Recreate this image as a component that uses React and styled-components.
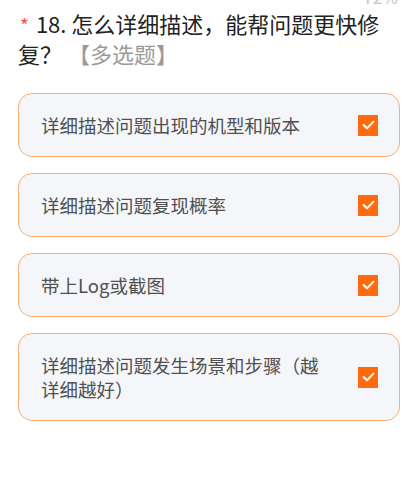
import styled, { createGlobalStyle } from 'styled-components'

const GlobalStyle = createGlobalStyle`
body {
  margin: 0;
  background: #ffffff;
  font-family: "Noto Sans CJK SC", "Noto Sans", sans-serif;
}
`

const Page = styled.div`
width: 414px;
height: 492px;
overflow: hidden;
padding: 0 14px 0 18px;
box-sizing: border-box;
`

const Progress = styled.div`
height: 5px;
overflow: hidden;
display: flex;
justify-content: flex-end;
align-items: flex-end;
margin-right: 2px;
`

const ProgressText = styled.span`
font-size: 17px;
line-height: 17px;
color: #c4c4c4;
`

const Title = styled.h2`
margin: 4px 0 0;
font-size: 22px;
font-weight: 400;
line-height: 29px;
color: #222222;
`

const Star = styled.span`
color: #f4524f;
font-size: 19px;
margin-right: 7px;
margin-left: 2px;
`

const Tag = styled.span`
color: #9a9a9a;
margin-left: 6px;
`

const List = styled.ul`
list-style-type: none;
margin: 25px 0 0;
padding: 0;
display: flex;
flex-direction: column;
gap: 16px;
`

const Option = styled.li`
display: flex;
align-items: center;
gap: 28px;
padding: 19px 21px 19px 22px;
border: 1.5px solid #fbab73;
border-radius: 14px;
background: #f5f6fa;
`

const Label = styled.span`
flex: 1;
font-size: 18.5px;
line-height: 24px;
color: #505050;
`

const Box = styled.span`
width: 20px;
height: 21px;
flex-shrink: 0;
background: #ff6a0e;
display: flex;
align-items: center;
justify-content: center;
`

const options = [
    '详细描述问题出现的机型和版本',
    '详细描述问题复现概率',
    '带上Log或截图',
    '详细描述问题发生场景和步骤（越详细越好）',
]

const Check = () => (
    <svg width="13" height="10" viewBox="0 0 13 10">
        <path d="M1.5 5 L5 8.2 L11.5 1.6" fill="none" stroke="#fff" strokeWidth="2" strokeLinecap="round" strokeLinejoin="round" />
    </svg>
)

const App = () => {
    return (
        <Page>
            <GlobalStyle />
            <Progress>
                <ProgressText>72%</ProgressText>
            </Progress>
            <Title>
                <Star>*</Star>
                18. 怎么详细描述，能帮问题更快修复？<Tag>【多选题】</Tag>
            </Title>
            <List>
                {options.map(text => (
                    <Option key={text}>
                        <Label>{text}</Label>
                        <Box><Check /></Box>
                    </Option>
                ))}
            </List>
        </Page>
    )
}

export default App
